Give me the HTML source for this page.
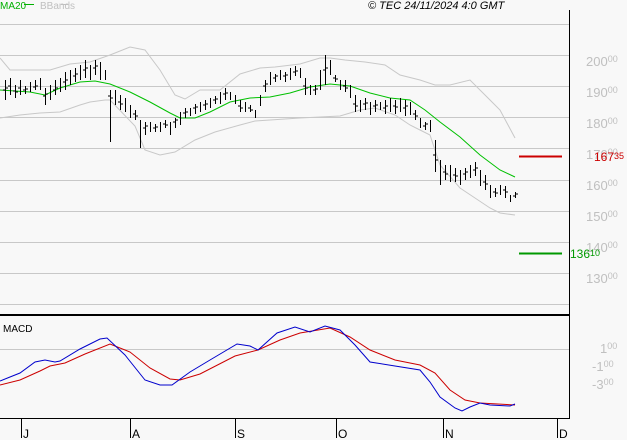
<!DOCTYPE html>
<html><head><meta charset="utf-8"><style>
html,body{margin:0;padding:0;background:#f8f8f8;}
svg{display:block;font-family:"Liberation Sans",sans-serif;}
</style></head><body>
<svg width="627" height="440" viewBox="0 0 627 440" xmlns="http://www.w3.org/2000/svg">
<rect width="627" height="440" fill="#f8f8f8"/>
<g stroke="#c8c8c8" stroke-width="1">
<line x1="0" y1="24.5" x2="569" y2="24.5"/><line x1="0" y1="55.5" x2="569" y2="55.5"/>
<line x1="0" y1="86.5" x2="569" y2="86.5"/><line x1="0" y1="117.5" x2="569" y2="117.5"/>
<line x1="0" y1="148.5" x2="569" y2="148.5"/><line x1="0" y1="180.5" x2="569" y2="180.5"/>
<line x1="0" y1="211.5" x2="569" y2="211.5"/><line x1="0" y1="242.5" x2="569" y2="242.5"/>
<line x1="0" y1="273.5" x2="569" y2="273.5"/><line x1="0" y1="304.5" x2="569" y2="304.5"/>
<line x1="0" y1="349.5" x2="569" y2="349.5"/>
</g>
<line x1="0" y1="315" x2="570" y2="315" stroke="#000" stroke-width="2"/>
<line x1="569.5" y1="10" x2="569.5" y2="419" stroke="#000"/>
<line x1="0" y1="418.5" x2="570" y2="418.5" stroke="#000"/>
<g stroke="#000"><line x1="21.5" y1="419" x2="21.5" y2="438"/><line x1="130.5" y1="419" x2="130.5" y2="438"/><line x1="235.5" y1="419" x2="235.5" y2="438"/><line x1="336.5" y1="419" x2="336.5" y2="438"/><line x1="443.5" y1="419" x2="443.5" y2="438"/><line x1="557.5" y1="419" x2="557.5" y2="438"/></g>
<g font-size="12" fill="#000"><text x="23" y="438">J</text><text x="132" y="438">A</text><text x="237" y="438">S</text><text x="338" y="438">O</text><text x="445" y="438">N</text><text x="559" y="438">D</text></g>
<text x="0" y="9" font-size="10" fill="#00b000">MA20</text><line x1="24" y1="4.5" x2="34" y2="4.5" stroke="#00b000"/>
<text x="40" y="9" font-size="10" fill="#c0c0c0">BBands</text><line x1="61" y1="4.5" x2="68" y2="4.5" stroke="#c0c0c0"/>
<text x="368" y="9" font-size="11" font-style="italic" fill="#000">© TEC 24/11/2024 4:0 GMT</text>
<text x="3" y="332" font-size="10" fill="#000">MACD</text>
<g fill="#c0c0c0" font-size="13">
<text x="586" y="66">200<tspan font-size="9" dy="-4">00</tspan></text>
<text x="586" y="97">190<tspan font-size="9" dy="-4">00</tspan></text>
<text x="586" y="128">180<tspan font-size="9" dy="-4">00</tspan></text>
<text x="586" y="159">170<tspan font-size="9" dy="-4">00</tspan></text>
<text x="586" y="190">160<tspan font-size="9" dy="-4">00</tspan></text>
<text x="586" y="221">150<tspan font-size="9" dy="-4">00</tspan></text>
<text x="586" y="252">140<tspan font-size="9" dy="-4">00</tspan></text>
<text x="586" y="283">130<tspan font-size="9" dy="-4">00</tspan></text>
<text x="600" y="353">1<tspan font-size="9" dy="-4">00</tspan></text>
<text x="592" y="371">-1<tspan font-size="9" dy="-4">00</tspan></text>
<text x="592" y="389">-3<tspan font-size="9" dy="-4">00</tspan></text>
</g>
<line x1="519" y1="156.5" x2="562" y2="156.5" stroke="#cc0000" stroke-width="2"/>
<text x="594" y="161" font-size="12" fill="#cc0000">167<tspan font-size="9" dy="-2">35</tspan></text>
<line x1="519" y1="253.5" x2="562" y2="253.5" stroke="#009900" stroke-width="2"/>
<text x="570" y="258" font-size="12" fill="#009900">136<tspan font-size="9" dy="-2">10</tspan></text>
<polyline fill="none" stroke="#c8c8c8" points="0,58 10,70 30,70 50,70 70,64 90,62 110,55 130,47 145,50 160,70 175,95 185,99 200,90 220,90 240,74 260,68 275,67 300,64 320,58 330,58 345,60 365,62 385,65 400,75 420,80 435,85 450,85 470,80 490,100 500,110 515,138"/>
<polyline fill="none" stroke="#c8c8c8" points="0,118 20,115 40,113 60,112 80,105 90,102 105,100 110,100 135,126 145,150 160,155 175,152 195,140 215,132 240,125 255,121 270,120 300,118 340,116 360,110 375,108 395,115 410,125 420,130 430,135 440,165 460,188 475,198 490,208 500,213 515,215"/>
<polyline fill="none" stroke="#00c000" points="0,90 30,92 45,95 60,88 80,82 95,81 110,84 130,92 150,102 170,113 180,118 195,118 210,112 230,102 250,98 270,97 290,93 310,87 330,84 350,86 370,93 390,98 410,100 425,110 440,122 460,137 480,155 500,170 515,177"/>
<path stroke="#000" fill="none" d="M5.5 80V100M10.5 78V95M15.5 85V98M20.5 80V95M25.5 86V94M30.5 82V92M35.5 80V90M40.5 78V90M45.5 88V105M50.5 85V100M55.5 80V95M60.5 78V92M65.5 72V90M70.5 70V85M75.5 68V82M80.5 65V80M85.5 60V78M90.5 65V80M95.5 60V75M100.5 62V80M105.5 70V80M110.5 90V142M115.5 90V105M120.5 95V110M125.5 98V112M130.5 105V118M135.5 110V120M140.5 120V148M145.5 122V135M150.5 122V132M155.5 124V132M160.5 122V132M165.5 120V128M170.5 122V135M175.5 118V128M180.5 112V125M185.5 108V118M190.5 108V116M195.5 104V114M200.5 102V112M205.5 100V110M210.5 98V108M215.5 96V104M220.5 92V104M225.5 88V100M230.5 92V100M235.5 95V104M240.5 100V112M245.5 102V112M250.5 105V112M255.5 110V118M260.5 95V106M265.5 80V92M270.5 72V85M275.5 74V82M280.5 70V80M285.5 72V82M290.5 68V80M295.5 66V76M300.5 68V78M305.5 78V95M310.5 85V95M315.5 85V95M320.5 70V90M325.5 55V85M330.5 60V75M335.5 75V82M340.5 80V90M345.5 80V92M350.5 85V98M355.5 95V112M360.5 100V112M365.5 98V110M370.5 102V115M375.5 100V112M380.5 102V110M385.5 100V114M390.5 98V112M395.5 100V114M400.5 98V112M405.5 100V116M410.5 102V115M415.5 110V120M420.5 118V128M425.5 122V130M430.5 120V132M435.5 140V172M440.5 160V185M445.5 165V180M450.5 165V182M455.5 168V182M460.5 170V185M465.5 168V180M470.5 165V178M475.5 162V176M480.5 170V186M485.5 175V190M490.5 185V198M495.5 188V197M500.5 185V195M505.5 186V198M510.5 195V202M515.5 192V198"/>
<path stroke="#000" fill="none" d="M3 90H5M5 88H8M8 86H10M13 91H15M15 92H18M18 88H20M23 90H25M25 89H28M33 87H35M35 86H38M43 96H45M45 94H48M53 90H55M55 88H58M63 82H65M65 80H68M73 76H75M75 74H78M83 70H85M85 68H88M93 68H95M95 66H98M108 96H110M110 98H113M118 102H120M120 104H123M133 114H135M135 116H138M143 128H145M145 126H148M153 128H155M155 127H158M163 124H165M165 125H168M173 122H175M175 120H178M183 113H185M185 112H188M193 108H195M195 107H198M203 105H205M205 104H208M213 100H215M215 99H218M223 94H225M225 93H228M238 106H240M240 108H243M248 108H250M250 110H253M263 86H265M265 84H268M273 78H275M275 76H278M283 76H285M285 75H288M293 72H295M295 71H298M303 86H305M305 88H308M313 90H315M315 89H318M323 70H325M325 68H328M333 78H335M335 79H338M343 86H345M345 88H348M353 104H355M355 106H358M363 104H365M365 103H368M373 106H375M375 105H378M383 108H385M385 106H388M393 106H395M395 107H398M403 108H405M405 106H408M413 114H415M415 116H418M423 126H425M425 124H428M433 155H435M435 160H438M443 172H445M445 174H448M453 175H455M455 176H458M463 174H465M465 172H468M473 170H475M475 168H478M483 182H485M485 184H488M493 192H495M495 193H498M503 190H505M505 192H508M513 196H515M515 194H518"/>
<polyline fill="none" stroke="#cc0000" points="0,385 20,380 40,371 50,366 65,363 85,354 110,344 130,352 150,368 170,379 180,380 200,374 235,356 258,350 280,340 300,333 330,328 350,337 370,350 395,360 420,365 435,373 450,390 465,400 480,403 515,405"/>
<polyline fill="none" stroke="#0000cc" points="0,381 10,377 20,373 35,362 45,360 55,362 60,361 80,349 100,339 107,338 125,355 145,380 160,385 172,385 190,372 210,360 237,344 250,346 258,350 277,333 295,327 310,332 325,326 340,330 355,345 370,362 395,366 420,370 430,382 440,397 455,408 462,411 470,407 480,403 490,405 510,406 515,404"/>
</svg>
</body></html>
